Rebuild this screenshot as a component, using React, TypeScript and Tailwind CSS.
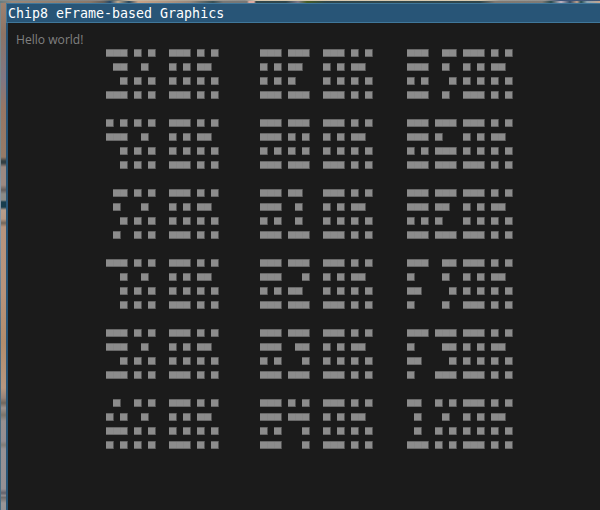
const OK = ['###.#.#', '#.#.##.', '#.#.#.#', '###.#.#'];

const GLYPHS: Record<string, string[]> = {
  '1': ['##.', '.#.', '.#.', '###'],
  '2': ['###', '..#', '##.', '###'],
  '3': ['###', '.##', '..#', '###'],
  '4': ['#.#', '###', '..#', '..#'],
  '5': ['.##', '.#.', '..#', '.#.'],
  '6': ['###', '#..', '###', '###'],
  '7': ['###', '..#', '..#', '..#'],
  '8': ['###', '###', '#.#', '###'],
  '9': ['###', '###', '..#', '###'],
  A: ['.#.', '#.#', '###', '#.#'],
  E: ['###', '##.', '#..', '###'],
  F: ['###', '#..', '##.', '#..'],
  O: ['###', '#.#', '#.#', '###'],
  X: ['#.#', '.#.', '#.#', '#.#'],
};

const LINES = [
  ['3X', 'OE', '85'],
  ['4X', '8O', '86'],
  ['5X', '81', '8E'],
  ['7X', '82', 'F5'],
  ['9X', '83', 'F3'],
  ['AX', '84', '1X'],
];

// Left column of each opcode, and the distance from it to its OK mark.
const COLUMNS = [
  { x: 14, ok: 9 },
  { x: 36, ok: 9 },
  { x: 57, ok: 8 },
];

type Run = { x: number; y: number; n: number };

function runs(rows: string[], col: number, top: number): Run[] {
  return rows.flatMap((row, r) =>
    Array.from(row.matchAll(/#+/g)).map((m) => ({
      x: (col + (m.index ?? 0)) * 7,
      y: top + r * 14,
      n: m[0].length,
    })),
  );
}

const PIXELS = LINES.flatMap((line, l) =>
  line.flatMap((code, c) => {
    const { x, ok } = COLUMNS[c];
    const top = l * 70;
    return [
      ...runs(GLYPHS[code[0]], x, top),
      ...runs(GLYPHS[code[1]], x + 4, top),
      ...runs(OK, x + ok, top),
    ];
  }),
);

function Display() {
  return (
    <svg className="block" width="592" height="461" shapeRendering="crispEdges">
      {PIXELS.map(({ x, y, n }) => (
        <g key={`${x}-${y}`}>
          <rect x={x} y={y} width={n * 7} height={8} fill="#686868" />
          <rect x={x + n * 7} y={y} width={1} height={8} fill="#515151" />
          <rect x={x} y={y + 1} width={n * 7} height={6} fill="#8c8c8c" />
          {Array.from({ length: n - 1 }, (_, i) => (
            <rect key={i} x={x + (i + 1) * 7} y={y + 1} width={1} height={6} fill="#888888" />
          ))}
        </g>
      ))}
    </svg>
  );
}

export default function App() {
  return (
    <div className="flex h-[510px] w-[600px] flex-col overflow-hidden bg-[#1b1b1b]">
      <div className="flex h-[3px] shrink-0 flex-col">
        <div className="h-px bg-[linear-gradient(90deg,#7e8d91_0px,#8b8581_100px,#586769_112px,#c9b8a1_130px,#a39c91_205px,#8c8d8c_245px,#d8c9b0_257px,#d9cbb1_480px,#9a9995_500px,#92918e_545px,#3f5579_560px,#435674_600px)]" />
        <div className="h-[2px] bg-[linear-gradient(90deg,#657c82_0px,#9a8778_12px,#8b7869_90px,#625f5b_104px,#24496b_110px,#c0a78b_118px,#28475c_129px,#c8a387_138px,#9a897c_190px,#375057_213px,#777776_223px,#777776_247px,#dcaaa0_249px,#dcaaa0_254px,#30464b_256px,#30464b_286px,#807987_298px,#465d25_307px,#30464b_326px,#30464b_480px,#817971_495px,#807b76_542px,#294b4f_551px,#c0b4c3_561px,#324a62_570px,#c0a08e_577px,#244b53_581px,#8ba3b1_587px,#c6a58e_600px)]" />
      </div>
      <div className="flex min-h-0 flex-1">
        <div className="w-px shrink-0 bg-[linear-gradient(#78888c_0px,#78888c_150px,#8796a5_180px,#8397a8_230px,#526f83_330px,#496f86_507px)]" />
        <div className="w-[5px] shrink-0 bg-[linear-gradient(#9d8271_0px,#8d7465_30px,#807784_75px,#967765_105px,#957b68_154px,#343f43_158px,#343f43_160px,#9c8982_164px,#9c8982_182px,#655e5c_187px,#8c8c88_191px,#8c8c88_197px,#183d4d_199px,#183d4d_204px,#b79d8b_207px,#b69884_216px,#716559_220px,#b6947e_224px,#b7937b_290px,#b18d6d_340px,#b69780_385px,#988379_395px,#70665c_400px,#9d918d_405px,#7c756b_412px,#979090_418px,#948e92_438px,#817d77_442px,#979295_446px,#959094_486px,#62616a_490px,#979295_493px,#6d6969_494px,#9a9697_500px,#969496_507px)]" />
        <div className="flex w-[594px] shrink-0 flex-col">
          <div className="flex h-5 shrink-0 items-center border-y border-l border-[#40779a] bg-[#285577] pl-px pt-0.5 font-['DejaVu_Sans_Mono',monospace] text-[13.3px] leading-[16px] text-white">
            <span className="whitespace-pre">Chip8 eFrame-based Graphics</span>
          </div>
          <div className="flex min-h-0 flex-1 flex-col border-l-2 border-[#285577] bg-[#1b1b1b]">
            <div className="h-[26px] shrink-0 pl-2 pt-[7px] font-['Open_Sans','Noto_Sans',sans-serif] text-[12.1px] leading-[19px] text-[#808080]">
              Hello world!
            </div>
            <Display />
          </div>
        </div>
      </div>
    </div>
  );
}
